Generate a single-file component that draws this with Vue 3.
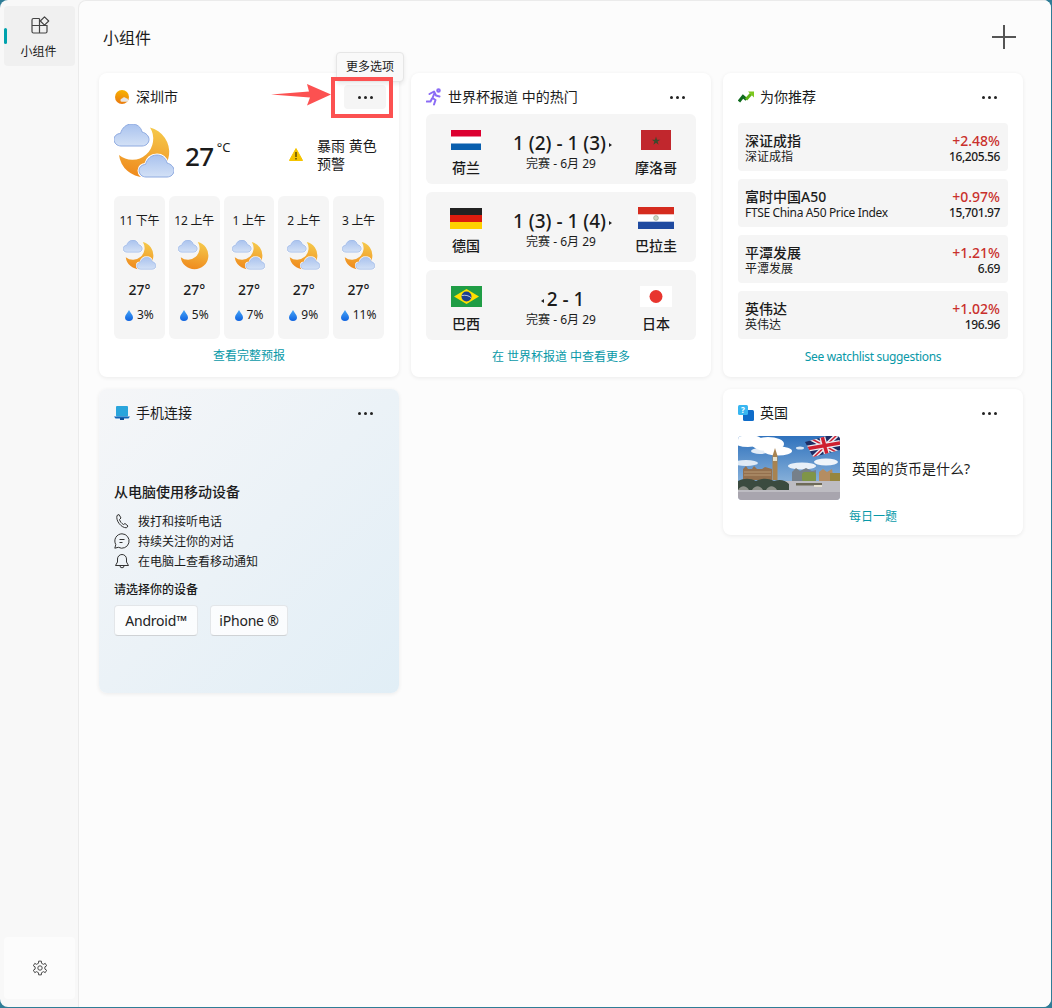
<script setup>
// 小时预报
const hours = [
  { time: '11 下午', icon: '#wx-cloudy', temp: '27°', rain: '3%' },
  { time: '12 上午', icon: '#wx-moon', temp: '27°', rain: '5%' },
  { time: '1 上午', icon: '#wx-cloudy', temp: '27°', rain: '7%' },
  { time: '2 上午', icon: '#wx-cloudy', temp: '27°', rain: '9%' },
  { time: '3 上午', icon: '#wx-cloudy', temp: '27°', rain: '11%' }
];

// 比赛数据
const matches = [
  {
    home: { name: '荷兰', flag: '#flag-nl', w: 30, h: 20 },
    away: { name: '摩洛哥', flag: '#flag-ma', w: 30, h: 20 },
    left: '1 (2)', right: '1 (3)', winner: 'right'
  },
  {
    home: { name: '德国', flag: '#flag-de', w: 32, h: 21 },
    away: { name: '巴拉圭', flag: '#flag-py', w: 36, h: 22 },
    left: '1 (3)', right: '1 (4)', winner: 'right'
  },
  {
    home: { name: '巴西', flag: '#flag-br', w: 31, h: 21 },
    away: { name: '日本', flag: '#flag-jp', w: 32, h: 21 },
    left: '2', right: '1', winner: 'left'
  }
];

// 股票
const stocks = [
  { name: '深证成指', sub: '深证成指', pct: '+2.48%', price: '16,205.56' },
  { name: '富时中国A50', sub: 'FTSE China A50 Price Index', pct: '+0.97%', price: '15,701.97', en: true },
  { name: '平潭发展', sub: '平潭发展', pct: '+1.21%', price: '6.69' },
  { name: '英伟达', sub: '英伟达', pct: '+1.02%', price: '196.96' }
];

// 齿轮外轮廓
function gearPath() {
  const pts = [];
  for (let i = 0; i < 6; i++) {
    const a = (Math.PI / 3) * i - Math.PI / 2;
    [[-0.3, 5], [-0.2, 7], [0.2, 7], [0.3, 5]].forEach(([d, r]) => {
      pts.push((8 + r * Math.cos(a + d)).toFixed(2) + ' ' + (8 + r * Math.sin(a + d)).toFixed(2));
    });
  }
  return 'M' + pts.join('L') + 'Z';
}
const gear = gearPath();
</script>

<template>
  <div class="screen">
    <!-- 公用图形 -->
    <svg class="defs" width="0" height="0">
      <defs>
        <linearGradient id="moon-grad" x1="0.6" y1="0" x2="0.4" y2="1">
          <stop offset="0" stop-color="#f5c84a" />
          <stop offset="1" stop-color="#ef8a1d" />
        </linearGradient>
        <linearGradient id="sun-grad" x1="0.6" y1="0" x2="0.4" y2="1">
          <stop offset="0" stop-color="#f8b400" />
          <stop offset="1" stop-color="#ea7a10" />
        </linearGradient>
        <linearGradient id="cloud-grad" x1="0" y1="0" x2="0" y2="1">
          <stop offset="0" stop-color="#a9c2ee" />
          <stop offset="1" stop-color="#d3e1f6" />
        </linearGradient>
        <linearGradient id="drop-grad" x1="0" y1="0" x2="0" y2="1">
          <stop offset="0" stop-color="#48a6f7" />
          <stop offset="1" stop-color="#0f63e0" />
        </linearGradient>
        <linearGradient id="sky-grad" x1="0" y1="0" x2="0" y2="1">
          <stop offset="0" stop-color="#2f72bd" />
          <stop offset="1" stop-color="#a9c8e4" />
        </linearGradient>
        <clipPath id="jack-clip">
          <path d="M67 6L89 0H102V14L75 21Z" />
        </clipPath>
        <path id="cloud" d="M7 22C3 22 0 19 0 15.500 0 12 3 9.500 6.500 9.500 8 4 12 0 18 0c5 0 9 3 10 8 4 1 7 4 7 7.500 0 3.500-3 6.500-7 6.500Z" />
        <path id="moon" d="M36 3.500A25.200 25.200 0 1 1 5 31 21 21 0 0 0 36 3.500Z" fill="url(#moon-grad)" />
        <symbol id="wx-cloudy" viewBox="0 0 60 56">
          <use href="#moon" />
          <use href="#cloud" fill="#fff" stroke="#fff" stroke-width="3" />
          <use href="#cloud" fill="url(#cloud-grad)" stroke="#8eaae0" stroke-width="1" />
          <use href="#cloud" x="25" y="31" fill="#fff" stroke="#fff" stroke-width="3" />
          <use href="#cloud" x="25" y="31" fill="url(#cloud-grad)" stroke="#8eaae0" stroke-width="1" />
        </symbol>
        <symbol id="wx-moon" viewBox="0 0 60 56">
          <use href="#moon" />
          <use href="#cloud" fill="#fff" stroke="#fff" stroke-width="3" />
          <use href="#cloud" fill="url(#cloud-grad)" stroke="#8eaae0" stroke-width="1" />
        </symbol>
        <symbol id="flag-nl" viewBox="0 0 30 20">
          <rect width="30" height="20" fill="#fff" />
          <rect width="30" height="6.500" fill="#dc0030" />
          <rect y="13.500" width="30" height="6.500" fill="#0a5fae" />
        </symbol>
        <symbol id="flag-ma" viewBox="0 0 30 20">
          <rect width="30" height="20" fill="#c1272d" />
          <path d="M15 6.500l1 3.200h3.200l-2.600 1.900 1 3.100-2.600-1.900-2.600 1.900 1-3.100-2.600-1.900H14Z" fill="#3d4a2d" />
        </symbol>
        <symbol id="flag-de" viewBox="0 0 32 21">
          <rect width="32" height="7" fill="#222" />
          <rect y="7" width="32" height="7" fill="#dd1c0e" />
          <rect y="14" width="32" height="7" fill="#ffd000" />
        </symbol>
        <symbol id="flag-py" viewBox="0 0 36 22">
          <rect width="36" height="22" fill="#fff" />
          <rect width="36" height="7.300" fill="#d52b1e" />
          <rect y="14.700" width="36" height="7.300" fill="#1f4aa0" />
          <circle cx="18" cy="11" r="2.400" fill="#cfd8c4" stroke="#8f9c84" stroke-width="0.6" />
        </symbol>
        <symbol id="flag-br" viewBox="0 0 31 21">
          <rect width="31" height="21" fill="#1f9d45" />
          <path d="M15.500 3L28 10.500 15.500 18 3 10.500Z" fill="#fedf00" />
          <circle cx="15.500" cy="10.500" r="5" fill="#1d3f8f" />
          <path d="M10.800 9.500c3.500-.6 7-.1 9.400 2.300" stroke="#fff" stroke-width="0.7" fill="none" />
        </symbol>
        <symbol id="flag-jp" viewBox="0 0 32 21">
          <rect width="32" height="21" fill="#fff" />
          <circle cx="16" cy="10.500" r="6.500" fill="#e8352e" />
        </symbol>
      </defs>
    </svg>

    <div class="window">
      <aside class="side">
        <div class="nav-item">
          <span class="nav-bar"></span>
          <svg class="nav-icon" width="20" height="20" viewBox="0 0 20 20" fill="none" stroke="#444" stroke-width="1.200">
            <path d="M9.500 3.500H3.500A1.500 1.500 0 0 0 2 5V16.500A1.500 1.500 0 0 0 3.500 18H15.500A1.500 1.500 0 0 0 17 16.500V10.500H2M9.500 3.500V18" />
            <path d="M14.500 1.800L18.700 6 14.500 10.200 10.300 6Z" stroke-linejoin="round" />
          </svg>
          <span class="nav-label">小组件</span>
        </div>
        <div class="gear-btn">
          <svg width="16" height="16" viewBox="0 0 16 16" fill="none" stroke="#4a4a4a" stroke-width="1">
            <path :d="gear" stroke-linejoin="round" />
            <circle cx="8" cy="8" r="2.200" />
          </svg>
        </div>
      </aside>

      <main class="main">
        <header class="top">
          <h1 class="page-title">小组件</h1>
          <svg width="24" height="24" viewBox="0 0 24 24" stroke="#555" stroke-width="2">
            <path d="M12 0V24M0 12H24" />
          </svg>
        </header>

        <div class="board">
          <!-- 第一列 -->
          <div class="col">
            <section class="card tall weather">
              <div class="card-head">
                <svg class="head-icon sun-icon" width="14" height="14" viewBox="0 0 14 14">
                  <circle cx="7" cy="7" r="7" fill="url(#sun-grad)" />
                  <path d="M7 11.800a1.600 1.600 0 0 1 .1-3.200A2.200 2.200 0 0 1 11 8.200a1.800 1.800 0 0 1 .6 3.600Z" fill="#e6e6e6" />
                </svg>
                <span class="head-title">深圳市</span>
                <span class="more is-hover"><i></i><i></i><i></i></span>
              </div>

              <div class="now">
                <svg width="60" height="56"><use href="#wx-cloudy" /></svg>
                <span class="now-temp">27</span>
                <span class="now-unit">°C</span>
                <div class="alert">
                  <svg width="14" height="13" viewBox="0 0 14 13">
                    <path d="M7 .500L13.600 12.500H.400Z" fill="#f5c400" stroke="#f5c400" stroke-linejoin="round" />
                    <path d="M7 4v5M7 10v1.500" stroke="#4a3b00" stroke-width="1.300" />
                  </svg>
                  <span class="alert-text">暴雨 黄色预警</span>
                </div>
              </div>

              <div class="hours">
                <div v-for="h in hours" :key="h.time" class="hour">
                  <span class="hour-time">{{ h.time }}</span>
                  <svg class="hour-icon" width="33" height="31"><use :href="h.icon" /></svg>
                  <span class="hour-temp">{{ h.temp }}</span>
                  <span class="hour-rain">
                    <svg width="8" height="11" viewBox="0 0 8 11">
                      <path d="M4 0C5 2.500 8 5 8 7.200A4 3.800 0 0 1 0 7.200C0 5 3 2.500 4 0Z" fill="url(#drop-grad)" />
                    </svg>
                    {{ h.rain }}
                  </span>
                </div>
              </div>
              <a class="card-link">查看完整预报</a>

              <!-- 截图上的标注 -->
              <div class="tooltip">更多选项</div>
              <div class="mark-box"></div>
              <svg class="mark-arrow" width="62" height="24" viewBox="0 0 62 24">
                <path d="M0 11.500L38 8.500 36 1 60 11.500 36 22.500 39 14.500Z" fill="#fc5151" />
              </svg>
            </section>

            <section class="card tall phone">
              <div class="card-head">
                <svg class="head-icon" width="16" height="14" viewBox="0 0 16 14">
                  <rect x="2" y="0" width="12" height="10.500" rx="1" fill="#2aa5dc" />
                  <path d="M0 10.500H16L14.500 12.500H1.500Z" fill="#1265b8" />
                  <rect x="6" y="12" width="4" height="2" fill="#0e4f97" />
                </svg>
                <span class="head-title">手机连接</span>
                <span class="more"><i></i><i></i><i></i></span>
              </div>
              <h2 class="phone-title">从电脑使用移动设备</h2>
              <ul class="phone-list">
                <li>
                  <svg width="16" height="16" viewBox="0 0 16 16" fill="none" stroke="#333" stroke-width="1">
                    <path d="M3 2.500L5 1.500 7 5 5.500 6.500C6 8.500 7.500 10.500 9.500 11.500L11 10.500 14 13 12.500 14.800C7.500 15 1.500 8 3 2.500Z" stroke-linejoin="round" />
                  </svg>
                  <span>拨打和接听电话</span>
                </li>
                <li>
                  <svg width="16" height="16" viewBox="0 0 16 16" fill="none" stroke="#333" stroke-width="1">
                    <path d="M8 .800A7.200 7.200 0 1 1 4.400 14.300L.800 15.200 1.800 11.600A7.200 7.200 0 0 1 8 .800Z" stroke-linejoin="round" />
                    <path d="M5.500 6.500H10.500M5.500 9.500H8.500" />
                  </svg>
                  <span>持续关注你的对话</span>
                </li>
                <li>
                  <svg width="16" height="16" viewBox="0 0 16 16" fill="none" stroke="#333" stroke-width="1">
                    <path d="M8 1.500A4.500 4.500 0 0 0 3.500 6V9L1.500 12.500H14.500L12.500 9V6A4.500 4.500 0 0 0 8 1.500ZM6 12.800A2 2 0 0 0 10 12.800" stroke-linejoin="round" />
                  </svg>
                  <span>在电脑上查看移动通知</span>
                </li>
              </ul>
              <div class="phone-ask">请选择你的设备</div>
              <div class="phone-btns">
                <button class="dev-btn android">Android™</button>
                <button class="dev-btn iphone">iPhone ®</button>
              </div>
            </section>
          </div>

          <!-- 第二列 -->
          <div class="col">
            <section class="card tall">
              <div class="card-head">
                <svg class="head-icon" width="16" height="18" viewBox="0 0 16 18" fill="none" stroke="#8b6cf5" stroke-width="2" stroke-linecap="round" stroke-linejoin="round">
                  <circle cx="12.500" cy="2.500" r="1.300" />
                  <path d="M3.500 6L8 3.500 10 7.500 13.500 8.500M8.500 5L6.500 10 9.500 12 8 16.500M6 10.500L4.500 13.500H.800" />
                </svg>
                <span class="head-title">世界杯报道 中的热门</span>
                <span class="more"><i></i><i></i><i></i></span>
              </div>
              <div class="matches">
                <div v-for="m in matches" :key="m.home.name" class="match">
                  <div class="team">
                    <span class="flag-box"><svg :width="m.home.w" :height="m.home.h"><use :href="m.home.flag" /></svg></span>
                    <span class="team-name">{{ m.home.name }}</span>
                  </div>
                  <div class="result">
                    <div class="score">
                      <i v-if="m.winner === 'left'" class="tri tri-left"></i>
                      <span :class="{ win: m.winner === 'left' }">{{ m.left }}</span>
                      <span> - </span>
                      <span :class="{ win: m.winner === 'right' }">{{ m.right }}</span>
                      <i v-if="m.winner === 'right'" class="tri tri-right"></i>
                    </div>
                    <div class="status">完赛 - 6月 29</div>
                  </div>
                  <div class="team">
                    <span class="flag-box"><svg :width="m.away.w" :height="m.away.h"><use :href="m.away.flag" /></svg></span>
                    <span class="team-name">{{ m.away.name }}</span>
                  </div>
                </div>
              </div>
              <a class="card-link">在 世界杯报道 中查看更多</a>
            </section>
          </div>

          <!-- 第三列 -->
          <div class="col">
            <section class="card tall">
              <div class="card-head">
                <svg class="head-icon" width="16" height="12" viewBox="0 0 16 12" fill="none" stroke-width="3">
                  <path d="M1 10.500L5 5.500 8.500 8.500" stroke="#0f6b1e" />
                  <path d="M8 8.500L13 3" stroke="#5fb318" />
                  <path d="M10 .500H16V6.500Z" fill="#7dc81e" />
                </svg>
                <span class="head-title">为你推荐</span>
                <span class="more"><i></i><i></i><i></i></span>
              </div>
              <div class="stocks">
                <div v-for="s in stocks" :key="s.name" class="stock">
                  <div>
                    <div class="stock-name">{{ s.name }}</div>
                    <div class="stock-sub" :class="{ en: s.en }">{{ s.sub }}</div>
                  </div>
                  <div class="stock-right">
                    <div class="stock-pct">{{ s.pct }}</div>
                    <div class="stock-price">{{ s.price }}</div>
                  </div>
                </div>
              </div>
              <a class="card-link watch-link">See watchlist suggestions</a>
            </section>

            <section class="card quiz">
              <div class="card-head">
                <svg class="head-icon" width="16" height="16" viewBox="0 0 16 16">
                  <rect x="5" y="5" width="11" height="11" rx="1.500" fill="#0f6cc9" />
                  <rect x="0" y="0" width="10" height="10" rx="1.500" fill="#38b6f1" />
                  <text x="5" y="8" font-size="8" fill="#fff" text-anchor="middle" font-family="Noto Sans, sans-serif" font-weight="700">?</text>
                </svg>
                <span class="head-title">英国</span>
                <span class="more"><i></i><i></i><i></i></span>
              </div>
              <div class="quiz-body">
                <!-- 大本钟照片 -->
                <svg class="quiz-pic" width="102" height="64" viewBox="0 0 102 64">
                  <rect width="102" height="64" fill="url(#sky-grad)" />
                  <g fill="#fff">
                    <ellipse cx="10" cy="5" rx="15" ry="6" />
                    <ellipse cx="30" cy="8" rx="16" ry="7" />
                    <ellipse cx="40" cy="15" rx="14" ry="4.500" />
                    <ellipse cx="22" cy="15" rx="9" ry="3" opacity="0.85" />
                    <ellipse cx="64" cy="30" rx="14" ry="3.500" opacity="0.85" />
                    <ellipse cx="88" cy="26" rx="12" ry="3.500" opacity="0.9" />
                    <ellipse cx="8" cy="27" rx="12" ry="3" opacity="0.8" />
                    <ellipse cx="62" cy="12" rx="4" ry="1.500" opacity="0.8" />
                  </g>
                  <!-- 议会大厦 -->
                  <path d="M5 44V33L8 30 10 33 14 33 16 30 19 33 24 33 27 31 34 33V44Z" fill="#94704e" />
                  <path d="M6 36H33M6 39H33" stroke="#c9ad88" stroke-width="0.7" />
                  <path d="M34.500 44V20L37 12 39.500 20V44Z" fill="#a88350" />
                  <rect x="35" y="21" width="4" height="4" fill="#e9e1c8" />
                  <path d="M54 46V36L58 32 62 35 68 32 74 35 78 34V46Z" fill="#76808a" />
                  <rect x="64" y="36" width="14" height="10" rx="3" fill="#7f9548" />
                  <path d="M81 46V36L85 33 89 36 94 33 96 46Z" fill="#b48d62" />
                  <rect x="92" y="37" width="10" height="9" fill="#96863f" />
                  <!-- 水面和桥 -->
                  <rect x="0" y="45" width="102" height="19" fill="#bdbcc2" />
                  <path d="M0 45C6 42 12 42 18 45 24 42 30 42 36 45 42 43 47 44 51 48V54H0Z" fill="#3b4b3f" />
                  <path d="M0 54C3 49 8 49 11 54ZM14 54C17 49 22 49 25 54ZM28 54C31 49 36 49 39 54Z" fill="#8d9088" />
                  <rect x="58" y="47" width="26" height="2.500" fill="#6e6a58" />
                  <rect x="76" y="49" width="8" height="2" fill="#e5e0d2" />
                  <path d="M0 56H102V64H0Z" fill="#a8a5ae" />
                  <!-- 英国国旗 -->
                  <g clip-path="url(#jack-clip)" fill="none">
                    <rect x="60" y="-2" width="44" height="26" fill="#1d2c63" />
                    <path d="M72 2L102 18M75 22L100 -2" stroke="#eceaf0" stroke-width="4.500" />
                    <path d="M72 2L102 18M75 22L100 -2" stroke="#cf2030" stroke-width="1.500" />
                    <path d="M67 13L102 7M84 0L90 22" stroke="#eceaf0" stroke-width="6" />
                    <path d="M67 13L102 7M84 0L90 22" stroke="#cf2030" stroke-width="3.500" />
                  </g>
                </svg>
                <span class="quiz-text">英国的货币是什么?</span>
              </div>
              <a class="card-link quiz-link">每日一题</a>
            </section>
          </div>
        </div>
      </main>
    </div>
  </div>
</template>

<style scoped>
.screen {
  width: 1052px;
  height: 1008px;
  box-sizing: border-box;
  padding: 0 1px 1px 0;
  background: #2f7d97;
  overflow: hidden;
  font-family: "Noto Sans", "Noto Sans CJK SC", sans-serif;
  color: #1b1b1b;
}
.defs { position: absolute; }

.window {
  display: flex;
  height: 100%;
  border-radius: 8px;
  overflow: hidden;
  background: #f8f8f8;
}

/* === 左侧栏 === */
.side {
  width: 78px;
  flex: none;
  box-sizing: border-box;
  padding: 6px 3px 8px 4px;
  display: flex;
  flex-direction: column;
  justify-content: space-between;
}
.nav-item {
  position: relative;
  height: 60px;
  background: #f0f0f0;
  border-radius: 4px;
  display: flex;
  flex-direction: column;
  align-items: center;
}
.nav-bar {
  position: absolute;
  left: 0;
  top: 22px;
  width: 3px;
  height: 16px;
  border-radius: 2px;
  background: #00a2ad;
}
.nav-icon { margin-top: 9px; }
.nav-label { font-size: 12px; line-height: 16px; margin-top: 9px; margin-left: -2px; }
.gear-btn {
  height: 62px;
  background: #fcfcfc;
  border-radius: 4px;
  display: flex;
  align-items: center;
  justify-content: center;
}

/* === 主区域 === */
.main {
  flex: 1;
  box-sizing: border-box;
  padding: 0 0 0 20px;
  background: #fcfcfc;
  border-left: 1px solid #ebebeb;
  border-top: 1px solid #ebebeb;
  border-top-left-radius: 8px;
}
.top {
  height: 72px;
  box-sizing: border-box;
  padding: 24px 35px 0 4px;
  display: flex;
  justify-content: space-between;
  align-items: flex-start;
}
.page-title {
  margin: 0;
  font-size: 16px;
  font-weight: 400;
  line-height: 26px;
}
.board {
  display: flex;
  gap: 12px;
}
.col {
  width: 300px;
  display: flex;
  flex-direction: column;
  gap: 12px;
}

/* === 卡片 === */
.card {
  position: relative;
  box-sizing: border-box;
  padding: 12px 15px 0;
  background: #fff;
  border-radius: 8px;
  box-shadow: 0 1px 4px rgba(0, 0, 0, 0.07);
  display: flex;
  flex-direction: column;
}
.tall { height: 304px; }
.card-head {
  height: 24px;
  flex: none;
  display: flex;
  align-items: center;
}
.head-icon { flex: none; margin-right: 6px; }
.sun-icon { margin: 0 7px 0 1px; }
.head-title { font-size: 14px; line-height: 24px; }
.more {
  margin-left: auto;
  margin-right: -2px;
  width: 42px;
  height: 24px;
  border-radius: 4px;
  display: flex;
  align-items: center;
  justify-content: center;
  gap: 3px;
}
.more i {
  width: 3px;
  height: 3px;
  border-radius: 50%;
  background: #222;
}
.more.is-hover { background: #f5f5f5; }
.card-link {
  flex: none;
  height: 20px;
  line-height: 20px;
  text-align: center;
  font-size: 12px;
  color: #0899a8;
}
.watch-link { letter-spacing: -0.33px; }

/* === 天气 === */
.now {
  display: flex;
  align-items: center;
  height: 56px;
  margin-top: 15px;
}
.now-temp {
  margin-left: 11px;
  font-size: 26px;
  font-weight: 500;
  letter-spacing: -0.5px;
  line-height: 34px;
  padding-top: 8px;
}
.now-unit {
  align-self: flex-start;
  margin: 14px 0 0 3px;
  font-size: 13px;
  line-height: 18px;
}
.alert {
  margin-left: auto;
  padding-top: 5px;
  display: flex;
  align-items: center;
}
.alert-text {
  width: 67px;
  margin-left: 14px;
  font-size: 14px;
  line-height: 18px;
}
.hours {
  display: grid;
  grid-template-columns: repeat(5, 1fr);
  gap: 4px;
  margin-top: 16px;
  height: 143px;
}
.hour {
  background: #f5f5f5;
  border-radius: 6px;
  display: flex;
  flex-direction: column;
  align-items: center;
  padding-top: 17px;
  box-sizing: border-box;
}
.hour-time { font-size: 12px; line-height: 16px; white-space: nowrap; letter-spacing: -0.2px; }
.hour-icon { margin-top: 11px; }
.hour-temp { margin-top: 9px; font-size: 14px; line-height: 20px; font-weight: 500; }
.hour-rain {
  margin-top: 6px;
  font-size: 12px;
  line-height: 18px;
  display: flex;
  align-items: center;
  gap: 4px;
  white-space: nowrap;
}
.weather .card-link { margin-top: 7px; }

/* === 更多选项标注 === */
.tooltip {
  position: absolute;
  left: 237px;
  top: -21px;
  width: 68px;
  height: 30px;
  box-sizing: border-box;
  line-height: 28px;
  text-align: center;
  font-size: 12px;
  background: #f9f9f9;
  border: 1px solid #e6e6e6;
  border-radius: 4px;
  box-shadow: 0 2px 4px rgba(0, 0, 0, 0.08);
}
.mark-box {
  position: absolute;
  left: 232px;
  top: 4px;
  width: 62px;
  height: 41px;
  box-sizing: border-box;
  border: 4px solid #fc5151;
}
.mark-arrow {
  position: absolute;
  left: 172px;
  top: 10px;
}

/* === 比赛 === */
.matches {
  margin-top: 5px;
  display: flex;
  flex-direction: column;
  gap: 8px;
}
.match {
  height: 70px;
  background: #f5f5f5;
  border-radius: 6px;
  display: grid;
  grid-template-columns: 80px 1fr 80px;
}
.team {
  display: flex;
  flex-direction: column;
  align-items: center;
  padding-top: 13px;
}
.flag-box {
  height: 26px;
  display: flex;
  align-items: center;
}
.team-name {
  margin-top: 5px;
  font-size: 14px;
  line-height: 20px;
  font-weight: 500;
}
.result { padding-top: 16px; text-align: center; }
.score {
  padding-left: 3px;
  font-size: 19px;
  line-height: 27px;
  font-weight: 500;
  white-space: nowrap;
}
.score .win { font-weight: 500; }
.tri {
  display: inline-block;
  width: 0;
  height: 0;
  border-top: 2.500px solid transparent;
  border-bottom: 2.500px solid transparent;
  vertical-align: 3px;
}
.tri-right { border-left: 3px solid #222; margin-left: 3px; }
.tri-left { border-right: 3px solid #222; margin-right: 3px; }
.status { font-size: 12px; line-height: 14px; }
.matches + .card-link { margin-top: 7px; }

/* === 股票 === */
.stocks {
  margin-top: 14px;
  display: flex;
  flex-direction: column;
  gap: 8px;
}
.stock {
  height: 48px;
  box-sizing: border-box;
  padding: 9px 8px 0 7px;
  background: #f5f5f5;
  border-radius: 4px;
  display: flex;
  justify-content: space-between;
}
.stock-name { font-size: 14px; line-height: 17px; font-weight: 500; }
.stock-sub { font-size: 12px; line-height: 16px; }
.stock-sub.en { letter-spacing: -0.35px; }
.stock-right { text-align: right; }
.stock-pct { font-size: 14px; line-height: 17px; font-weight: 500; color: #c9302c; }
.stock-price { font-size: 12px; line-height: 16px; font-weight: 500; letter-spacing: -0.4px; }
.stocks + .card-link { margin-top: 8px; }

/* === 手机连接 === */
.phone { background: linear-gradient(135deg, #f5f6f8 0%, #e1eef6 100%); }
.phone-title {
  margin: 56px 0 0;
  font-size: 14px;
  line-height: 22px;
  font-weight: 500;
}
.phone-list {
  list-style: none;
  margin: 8px 0 0;
  padding: 0;
}
.phone-list li {
  height: 20px;
  display: flex;
  align-items: center;
  gap: 8px;
  font-size: 12px;
}
.phone-ask {
  margin-top: 10px;
  font-size: 12px;
  line-height: 18px;
  font-weight: 500;
}
.phone-btns {
  margin-top: 6px;
  display: flex;
  gap: 12px;
}
.dev-btn {
  height: 31px;
  padding: 0;
  font: 14px "Noto Sans", "Noto Sans CJK SC", sans-serif;
  letter-spacing: -0.2px;
  color: #222;
  background: rgba(255, 255, 255, 0.8);
  border: 1px solid #e3e6e9;
  border-bottom-color: #cfd2d5;
  border-radius: 4px;
}
.android { width: 84px; }
.iphone { width: 78px; }

/* === 每日一题 === */
.quiz { height: 146px; }
.quiz-body {
  margin-top: 11px;
  display: flex;
  align-items: center;
  gap: 12px;
}
.quiz-pic { flex: none; border-radius: 4px; }
.quiz-text { font-size: 14px; line-height: 20px; padding-top: 2px; }
.quiz-link { margin-top: 7px; }
</style>

<style>
html, body { background: #2f7d97; }
</style>
